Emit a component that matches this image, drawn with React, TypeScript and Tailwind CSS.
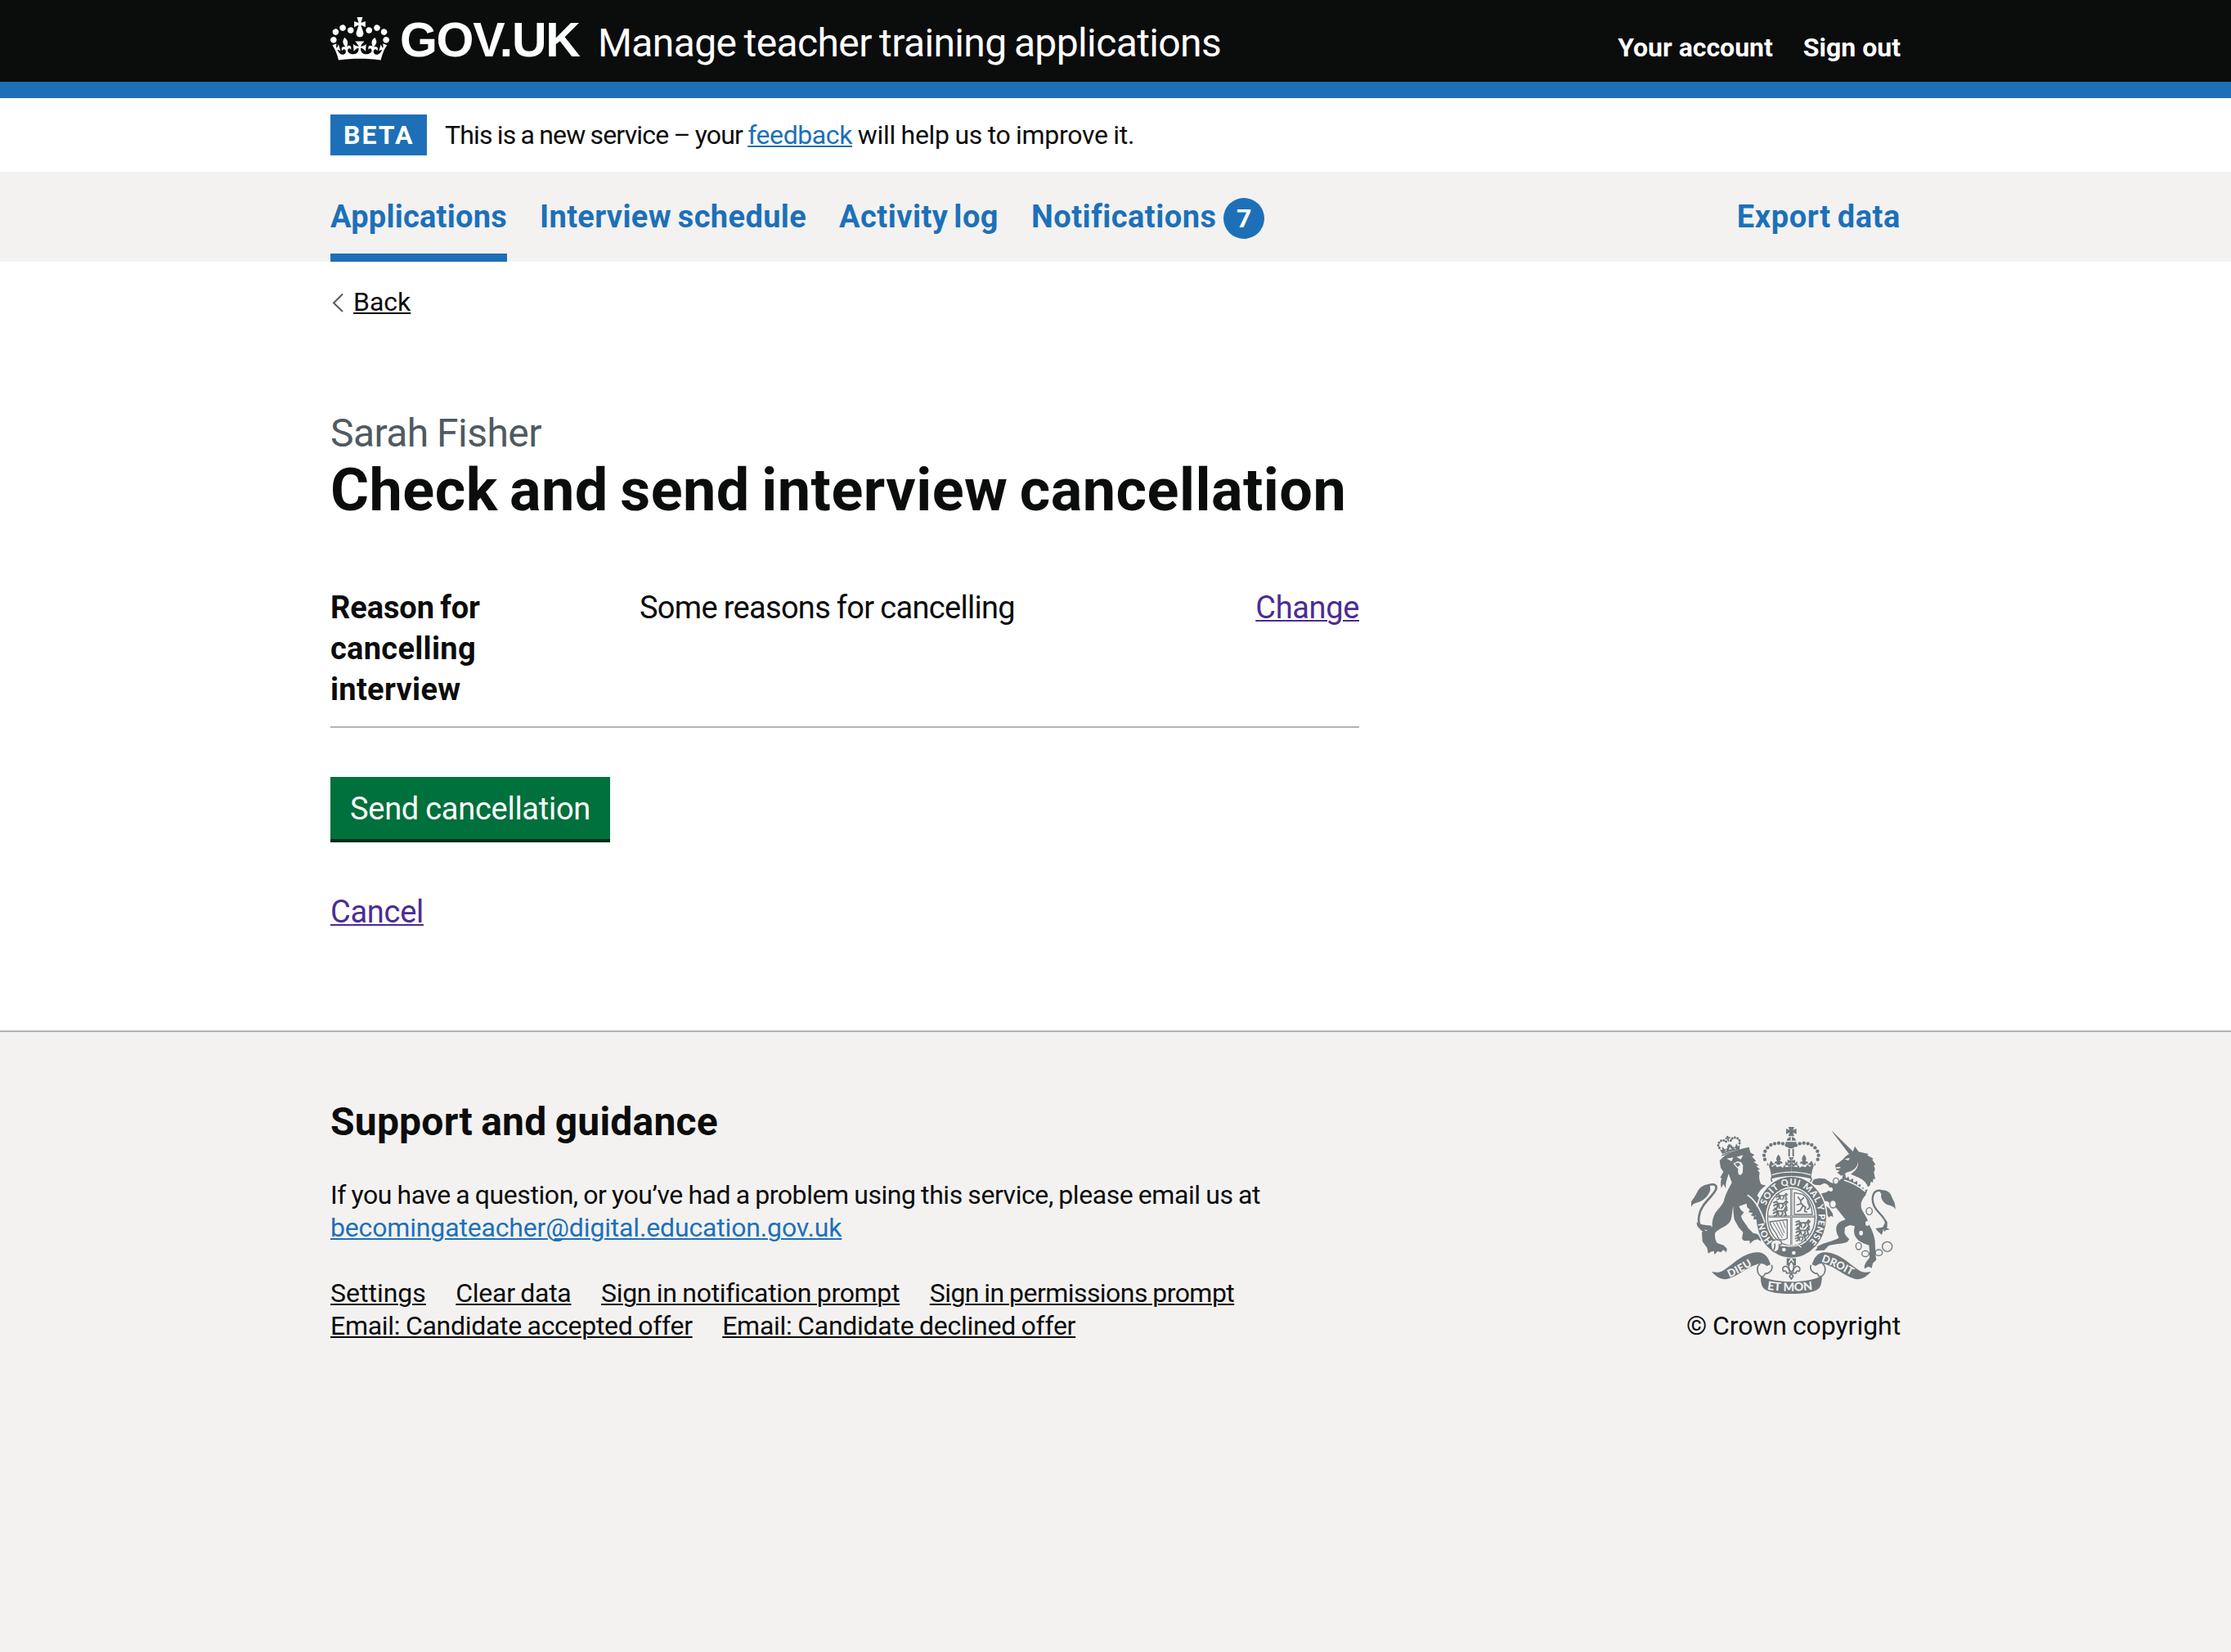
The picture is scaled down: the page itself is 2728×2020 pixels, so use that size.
import type { ReactNode } from "react";

const CROWN =
  "M25 30.2c3.5 1.5 7.7-.2 9.1-3.7 1.5-3.6-.2-7.8-3.9-9.2-3.6-1.4-7.6.3-9.1 3.9-1.4 3.5.3 7.5 3.9 9zM9 39.5c3.6 1.5 7.8-.2 9.2-3.7 1.5-3.6-.2-7.8-3.9-9.1-3.6-1.5-7.6.2-9.1 3.8-1.4 3.5.3 7.5 3.8 9zM4.4 57.2c3.5 1.5 7.7-.2 9.1-3.8 1.5-3.6-.2-7.7-3.9-9.1-3.5-1.5-7.6.3-9.1 3.8-1.4 3.5.3 7.6 3.9 9.1zm38.3-21.4c3.5 1.5 7.7-.2 9.1-3.8 1.5-3.6-.2-7.7-3.9-9.1-3.6-1.5-7.6.3-9.1 3.8-1.3 3.6.4 7.7 3.9 9.1zm64.4-5.6c-3.6 1.5-7.8-.2-9.1-3.7-1.5-3.6.2-7.8 3.8-9.2 3.6-1.4 7.7.3 9.2 3.9 1.3 3.5-.4 7.5-3.9 9zm15.9 9.3c-3.6 1.5-7.7-.2-9.1-3.7-1.5-3.6.2-7.8 3.7-9.1 3.6-1.5 7.7.2 9.2 3.8 1.5 3.5-.3 7.5-3.8 9zm4.7 17.7c-3.6 1.5-7.8-.2-9.2-3.8-1.5-3.6.2-7.7 3.9-9.1 3.6-1.5 7.7.3 9.2 3.8 1.3 3.5-.4 7.6-3.9 9.1zM89.3 35.8c-3.6 1.5-7.8-.2-9.2-3.8-1.4-3.6.2-7.7 3.9-9.1 3.6-1.5 7.7.3 9.2 3.8 1.4 3.6-.3 7.7-3.9 9.1zM69.7 17.7l8.9 4.7V9.3l-8.9 2.8c-.2-.3-.5-.6-.9-.9L72.4 0H59.6l3.5 11.2c-.3.3-.6.5-.9.9l-8.8-2.8v13.1l8.8-4.7c.3.3.6.7.9.9l-5 15.4v.1c-.2.8-.4 1.6-.4 2.4 0 4.1 3.1 7.5 7 8.1h.2c.3 0 .7.1 1 .1.4 0 .7 0 1-.1h.2c4-.6 7.1-4.1 7.1-8.1 0-.8-.1-1.7-.4-2.4V34l-5.1-15.4c.4-.2.7-.6 1-.9zM66 92.8c16.9 0 32.8 1.1 47.1 3.2 4-16.9 8.9-26.7 14-33.5l-9.6-3.4c1 4.9 1.1 7.2 0 10.2-1.5-1.4-3-4.3-4.2-8.7L108.6 76c2.8-2 5-3.2 7.5-3.3-4.4 9.4-10 11.9-13.6 11.2-4.3-.8-6.3-4.6-5.6-7.9 1-4.7 5.7-5.9 8-.5 4.3-8.7-3-11.4-7.6-8.8 7.1-7.2 7.9-13.5 2.1-21.1-8 6.1-8.1 12.3-4.5 20.8-4.7-5.4-12.1-2.5-9.5 6.2 3.4-5.2 7.9-2 7.2 3.1-.6 4.3-6.4 7.8-13.5 7.2-10.3-.9-10.9-8-11.2-13.8 2.5-.5 7.1 1.8 11 7.3L80.2 60c-4.1 4.4-8 5.3-12.3 5.4 1.4-4.4 8-11.6 8-11.6H55.5s6.4 7.2 7.9 11.6c-4.2-.1-8-1-12.3-5.4l1.4 16.4c3.9-5.5 8.5-7.7 10.9-7.3-.3 5.8-.9 12.8-11.1 13.8-7.2.6-12.9-2.9-13.5-7.2-.7-5 3.8-8.3 7.1-3.1 2.7-8.7-4.6-11.6-9.4-6.2 3.7-8.5 3.6-14.7-4.6-20.8-5.8 7.6-5 13.9 2.2 21.1-4.7-2.6-11.9.1-7.7 8.8 2.3-5.5 7.1-4.2 8.1.5.7 3.3-1.3 7.1-5.7 7.9-3.5.7-9-1.8-13.5-11.2 2.5.1 4.7 1.3 7.5 3.3l-4.7-15.4c-1.2 4.4-2.7 7.2-4.3 8.7-1.1-3-.9-5.3 0-10.2l-9.5 3.4c5 6.9 9.9 16.7 14 33.5 14.8-2.1 30.8-3.2 47.7-3.2z";

const INK = "#6f777b";
const PAPER = "#f3f2f1";

function CrestCrownHalf() {
  const beads = [
    [434, 121], [420, 115], [405, 113], [390, 115], [376, 120], [364, 130], [355, 143], [351, 158], [354, 173],
  ];
  return (
    <g>
      {beads.map(([x, y]) => (
        <circle key={x} cx={x} cy={y} r="6.5" />
      ))}
      <path d="M451 196l-12 4c2-6 4-10 10-16l-12 4v-14l12 4-8-13h10z" />
      <path d="M451 200l-8-8-14-12v16l8-2z" />
      <path d="M363 183l-1 13 12-4 8 8 11-8 5 10 14-4 8 6 6-12 4 10 21-4v36c-28 0-50 4-72 10-2-24-8-44-16-61z" />
      <path d="M404 155c9 10 10 18 4 26 7-3 12 1 10 9-5-4-8-2-8 3h-12c0-5-4-7-8-3-2-8 3-12 10-9-6-8-5-16 4-26z" />
      <path d="M376 178l14 14-12 4-8-4z" />
      <path d="M451 227c-26 0-46 3-66 9-9 3-10 12-4 19" fill="none" stroke={INK} strokeWidth="5" />
    </g>
  );
}

function RibbonHalf() {
  return (
    <g>
      <path d="M159 585c16 3 28 4 40-3 28-16 52-44 88-59 22-10 44-12 60-5 14 7 23 22 28 41l-14 5c-10-9-22-11-36-6-40 12-66 40-102 52-24 8-46-4-64-25z" />
      <path
        d="M379 560c6 18-8 32-24 32-4 8-6 14-14 10-16-8-20-36-4-46"
        fill="none"
        stroke={INK}
        strokeWidth="5"
        strokeLinejoin="round"
      />
      <path d="M338 600c30 16 70 21 114 22v44c-46-1-84-4-101-19-10-9-12-26-13-47z" />
    </g>
  );
}

/** A small passant lion, used in the quarters of the shield. */
function Passant({ x, y, s = 1 }: { x: number; y: number; s?: number }) {
  return (
    <g transform={`translate(${x} ${y}) scale(${s})`} fill="none" stroke={INK} strokeWidth="4.5" strokeLinecap="round">
      <path d="M4 6l8-3 4 6 18-1 6-7 4 4-6 6" />
      <path d="M8 12l8-2-3 12-6 1M18 12l2 10M30 10l2 6-6 7M38 11l4 10-5 1" />
      <path d="M4 15l5-3" />
    </g>
  );
}

function RoyalArms() {
  return (
    <svg className="h-[204px] w-[250px]" viewBox="84 54 750 612" fill={INK} aria-hidden="true">
      <defs>
        <path id="garterTop" d="M358 342A100 118 0 1 1 503 486" />
        <path id="garterSide" d="M384 474A100 118 0 0 1 351 390" />
        <path id="dieu" d="M224 606Q262 592 334 545" />
        <path id="droit" d="M561 548Q612 564 690 610" />
        <path id="etmon" d="M362 650Q450 664 546 648" />
      </defs>

      <g transform="translate(60 30)">
        <path d="M128 147l22-20c26-14 58-24 86-29l5 20 15 9-9 6 15 16-9 3 19 13-10 2 14 12-9 3 8 10c-4 14-1 28 5 42l18 5c-14 8-26 22-32 36l26 38 3 42c0 8-4 16-8 20l-8-8-12 5-2-10-13 2 2-12-12-4 8-8-16-3 5-10-10-8-2-14-12 4c-6 4-14 5-16 6 4 10 10 18 18 22l-10 14c4 18 18 28 26 44l18 18 16 4 14 14-2 12-12-7-14 4-14 12-1-11-20 1-8-8 4-24-16-18-16-28c-2-16-5-28-3-50-8 22-2 44-16 62-14 16-42 22-52 38 0 14 0 24 8 36l24 8 12 12-2 14-12-9-8 9-12-4-12 12-2-13-12 3-8 6c-4-8-2-16-6-22l-16-22-2-32 6-10 10 4 22-16c-1-24 5-40 12-52 14-18 28-30 32-48 8-28 20-46 28-62l-12-32-6 20c-4 14-5 24-4 34l-9-16-8 14c-3-16-2-28 2-36l-6-2 12-22-10-14z" />
        <path d="M154 140l24-4-6 14zM190 134l24-7-8 16z" fill={PAPER} />
        <path d="M178 158l16-8 14 4 6 12-1 24c-4 14-17 14-17 0-2-8 4-12-4-16z" fill={PAPER} />
        <path d="M184 158l14-3 6 8-10 8z" />
        <path d="M98 398c-18 2-34-4-43-16-8-16-2-48 12-68 16-24 40-42 48-62 4-14-6-22-28-14" fill="none" stroke={INK} strokeWidth="8" />
        <path d="M92 234c-16 0-34 8-42 22-8 14-12 24-26 42v20c4-8 8-12 14-14 26-6 46-20 56-48z" />
        <path d="M44 372c0 14 4 20 10 24 10 14 20 16 30 10-10-1-12-4-12-10l26 4v-14l-20-2-24-4z" />
      </g>

      <g transform="translate(60 30) rotate(-13 166 100)">
        {[[128, 92], [126, 82], [131, 73], [140, 68], [150, 69], [157, 75], [175, 75], [182, 69], [192, 68], [201, 73], [206, 82], [204, 92]].map(
          ([x, y]) => (
            <circle key={`${x}-${y}`} cx={x} cy={y} r="4.5" />
          ),
        )}
        <path d="M162 56h8l-1 6 6-2v8l-6-2-1 12h-4l-1-12-6 2v-8l6 2z" />
        <path d="M128 98l8 4 4-12 6 12 10-2 2-8 8-6 8 6 2 8 10 2 6-12 4 12 8-4-6 18c-20-4-44-4-64 0z" />
        <path d="M130 122c22-6 50-6 72 0" fill="none" stroke={INK} strokeWidth="4" />
        <path d="M146 110l6-6M162 108l4-8 4 8M186 110l-6-6" stroke={PAPER} strokeWidth="3" />
      </g>

      <g transform="translate(420 30)">
        <path d="M180 38c2 2 4 2 6 6l80 78-18 8-64-84z" />
        <path d="M194 162c14-10 26-18 34-28 8-8 18-12 27-14l9-25 14 20 36 8-4 5 22 12-4 4 12 18-6 2 4 16-4 10 5 26-7-2-2 14-7-4-4 16-8 4c-2-14-16-26-32-34l-42-18c-12 2-16 10-22 12l-10-8-6-4 10-8-12-2c-4-8-6-14-3-20z" />
        <path d="M226 142l20-4-6 9zM276 150c2 22-8 36-32 50l-14-8c32-6 44-20 46-42zM194 172l16-2 2 5-14 2z" fill={PAPER} />
        <path d="M214 214l90 60c-12 14-20 26-16 48 6 18 24 36 28 60 12 20 18 38 22 60l2 50c0 8 4 14 2 20l-12 12-4 18-12-6-14 8c-4-14 8-28 18-40v-26l-2-20c-16-6-34-12-44-24-10-12-14-26-8-46l-18-4-18 8-2 20c4 12 12 18 18 24l-8 10c-20 8-50 6-68 14l-16 16-34 2 10-12-6-2 22-10c20-8 46-12 62-24-10-16-14-34-6-48 6-10 18-14 30-18l-30-38-18-20c-10 0-18-12-28-10-6 4-2 12 4 18l10 6 14 20 3 14-10-4-6 6-8-12-12-4-1-14-16-32-6-12 8-12 24-6 14-8c2-14-6-22-20-26l-16 8-18-2-12-6 8-14 20-4 20 2 22 14 20 6z" />
        <path d="M222 200c6 14 12 20 22 24l34 16 30 16 6 4" fill="none" stroke={PAPER} strokeWidth="20" />
        <path d="M221 197l8-1 2 16 10-6 4 14 12-8 2 16 14-6v16l13-4-2 14 12-2-1 12 16-5-8 22-8-2c-20-20-54-36-81-44z" />
        <path d="M224 219c28 8 56 22 78 42" fill="none" stroke={PAPER} strokeWidth="5" />
        <path d="M378 268c-16-14-38-16-46 4-10 28 6 52 24 70 20 20 32 44 16 64" fill="none" stroke={INK} strokeWidth="7" />
        <path d="M354 258c24-8 42 6 46 24 6 14 12 16 13 44-8-12-14-12-28-16-14-6-28-22-24-40z" />
        <path d="M380 366c6 10 2 18-4 26l16 8c-8 4-16 2-24 0 0 8-2 12-6 20-6-8-14-12-22-24l26-4z" />
        <g fill="none" stroke={INK} strokeWidth="4">
          <ellipse cx="195" cy="223" rx="10" ry="12" />
          <ellipse cx="184" cy="307" rx="12" ry="14" fill={PAPER} />
          <ellipse cx="317" cy="333" rx="11" ry="13" fill={PAPER} />
          <ellipse cx="278" cy="461" rx="10" ry="13" />
          <ellipse cx="303" cy="489" rx="13" ry="11" />
          <ellipse cx="352" cy="485" rx="13" ry="11" />
          <circle cx="383" cy="463" r="18" />
        </g>
        <ellipse cx="176" cy="253" rx="7" ry="8" fill={PAPER} />
        <ellipse cx="310" cy="378" rx="7" ry="9" fill={PAPER} />
        <ellipse cx="287" cy="413" rx="7" ry="9" fill={PAPER} />
      </g>

      <ellipse cx="451" cy="385" rx="133" ry="153" fill={PAPER} />
      <ellipse cx="451" cy="385" rx="128" ry="148" />
      <ellipse cx="451" cy="385" rx="94" ry="111" fill={PAPER} />
      <ellipse cx="451" cy="385" rx="87" ry="104" fill={PAPER} stroke={INK} strokeWidth="4" />
      <path d="M451 280v212M364 383h174" stroke={INK} strokeWidth="7" />
      <path d="M451 280v212M364 383h174" stroke={PAPER} strokeWidth="1.5" />
      <Passant x={392} y={297} />
      <Passant x={382} y={324} s={1.25} />
      <Passant x={380} y={352} s={1.25} />
      <Passant x={464} y={395} s={1.25} />
      <Passant x={464} y={423} s={1.2} />
      <Passant x={462} y={449} />
      <path d="M462 295v80h66c0-30-14-60-36-74z" fill="none" stroke={INK} strokeWidth="4" />
      <g fill="none" stroke={INK} strokeWidth="5" strokeLinecap="round">
        <path d="M476 312l8 10 4 14 16 14M488 322l8-8M484 336l-12 4M494 342l-10 18-10 4M502 350l-2 14 8 2M510 356c14-4 6-16 2-24-2-8 2-12-4-16" />
      </g>
      <g fill="none" stroke={INK} strokeWidth="4">
        <path d="M372 402l64-8v68c-14 10-30 8-34-2-4-20-24-30-30-58z" />
        <path d="M384 404l34 58M396 403l26 50M408 401l18 42M420 399l10 26" strokeWidth="3" />
      </g>

      <path d="M376 470l44 18c20 8 42 8 66-2l30 18c-26 26-104 38-140-6z" />
      <path d="M400 486c22 6 46 6 72-2M472 484l16 12" fill="none" stroke={PAPER} strokeWidth="4" />
      <path d="M376 480c6-14 26-16 38-6 4 8-2 14-8 12 2 12 0 20-10 25-12 4-20-8-20-31z" fill={PAPER} stroke={INK} strokeWidth="4" />
      <path d="M390 482c2 10 0 18-4 24" fill="none" stroke={INK} strokeWidth="5" />
      <circle cx="424" cy="504" r="7" fill={PAPER} />
      <circle cx="460" cy="516" r="7" fill={PAPER} />
      <path d="M326 340c14 18 24 38 30 60l-8 10-10-6-12 4-2-14-8-2 4-14-12-4z" />
      <path d="M290 304c24 14 48 52 64 100" fill="none" stroke={PAPER} strokeWidth="5" />

      <path d="M380 250c-6-14 6-22 20-24 34-6 70-6 104 0 14 2 24 10 18 24-46-20-96-20-142 0z" fill={PAPER} />
      <CrestCrownHalf />
      <g transform="translate(902 0) scale(-1 1)">
        <CrestCrownHalf />
      </g>
      <path d="M440 54h22l-5 12 13-6v20l-13-6 5 14h-22l5-14-13 6V60l13 6z" />
      <path d="M434 104c2-18 32-18 34 0z" />
      <path d="M430 109h40c0 20-12 24-20 24s-20-4-20-24zM440 134h6v28h-6zM455 134h6v28h-6z" />
      <path d="M449 88h4v18h-4z" fill={PAPER} />
      <path d="M380 230c42-14 100-14 142 0" fill="none" stroke={PAPER} strokeWidth="4" />

      <path d="M434 536h34v26h-34z" />
      <path d="M451 534l10 14-4 12 2 20h-16l2-20-4-12z" fill={PAPER} />
      <g fill={PAPER} stroke={INK} strokeWidth="5" strokeLinejoin="round">
        <path d="M451 546c-12 14-12 20-4 38h8c8-18 8-24-4-38z" />
        <path d="M445 586c-2-14-10-24-20-20-8 4-6 14-2 18 6-4 12 0 10 8M457 586c2-14 10-24 20-20 8 4 6 14 2 18-6-4-12 0-10 8" />
        <path d="M432 590h38M451 592l-7 10 7 10 7-10z" />
      </g>

      <RibbonHalf />
      <g transform="translate(902 0) scale(-1 1)">
        <RibbonHalf />
      </g>

      <g fill={PAPER} className="font-['Lato','Liberation_Sans',sans-serif] font-black">
        <text fontSize="39" letterSpacing="1">
          <textPath href="#dieu">DIEU</textPath>
        </text>
        <text fontSize="39">
          <textPath href="#droit">DROIT</textPath>
        </text>
        <text fontSize="43">
          <textPath href="#etmon">ET MON</textPath>
        </text>
        <text fontSize="33" letterSpacing="2">
          <textPath href="#garterTop">SOIT QUI MAL Y PENSE</textPath>
        </text>
        <text fontSize="33">
          <textPath href="#garterSide">HON</textPath>
        </text>
      </g>
    </svg>
  );
}

function Container({ className = "", children }: { className?: string; children: ReactNode }) {
  return <div className={`mx-auto w-[1920px] ${className}`}>{children}</div>;
}

const LINK = "underline decoration-2 underline-offset-2";

export default function App() {
  return (
    <div className="flex min-h-[2020px] flex-col bg-white font-[Roboto,'Liberation_Sans',sans-serif] text-[32px] leading-[40px] text-[#0b0c0c]">
      <header className="h-[120px] border-b-[20px] border-[#1d70b8] bg-[#0b0c0c] text-white">
        <Container className="flex items-baseline pt-[19px]">
          <a href="#" className="flex items-baseline">
            <svg className="mt-[2px] h-[53px] w-[72px] self-start" viewBox="0 0 132 97" fill="currentColor" aria-hidden="true">
              <path fillRule="evenodd" d={CROWN} />
            </svg>
            <span className="ml-[13px] w-[220px] font-['Liberation_Sans',sans-serif] text-[59px] leading-[61px] font-bold tracking-[-1.3px]">
              GOV.UK
            </span>
          </a>
          <a href="#" className="ml-[22px] text-[48px] leading-[48px] tracking-[-0.62px] [word-spacing:-2px]">
            Manage teacher training applications
          </a>
          <nav className="ml-auto flex gap-[37px] font-bold">
            <a href="#">Your account</a>
            <a href="#">Sign out</a>
          </nav>
        </Container>
      </header>

      <Container className="flex h-[90px] items-center leading-[50px]">
        <strong className="w-[118px] bg-[#1d70b8] pl-[16px] tracking-[2px] text-white">BETA</strong>
        <p className="ml-[22px] whitespace-pre [word-spacing:-1px]">
          <span className="tracking-[-0.83px]">This is a new service – your </span>
          <a href="#" className={`${LINK} tracking-[-0.4px] text-[#1d70b8]`}>
            feedback
          </a>
          <span className="tracking-[-0.29px]"> will help us to improve it.</span>
        </p>
      </Container>

      <nav className="h-[110px] bg-[#f3f2f1] text-[38px] font-bold text-[#1d70b8]">
        <Container className="flex gap-[40px]">
          <a href="#" className="h-[110px] border-b-[10px] border-[#1d70b8] pt-[35px] tracking-[0.24px]">
            Applications
          </a>
          <a href="#" className="pt-[35px] tracking-[0.36px] [word-spacing:-2px]">
            Interview schedule
          </a>
          <a href="#" className="pt-[35px] tracking-[0.48px] [word-spacing:-3px]">
            Activity log
          </a>
          <a href="#" className="flex pt-[35px] tracking-[0.48px]">
            Notifications
            <span className="-mt-[3px] ml-[9px] flex size-[50px] items-center justify-center rounded-full bg-[#1d70b8] text-[32px] text-white">
              7
            </span>
          </a>
          <a href="#" className="ml-auto pt-[35px] tracking-[0.6px] [word-spacing:-2px]">
            Export data
          </a>
        </Container>
      </nav>

      <Container className="flex-none">
        <a href="#" className="mt-[29px] flex w-fit items-center">
          <svg className="mt-[2px] ml-[2px] h-[24px] w-[14px]" viewBox="0 0 14 24" fill="none" stroke="#505a5f" strokeWidth="2">
            <path d="M13 1.5 2 12.5l11 10.5" />
          </svg>
          <span className={`${LINK} ml-[12px]`}>Back</span>
        </a>

        <main className="mt-[116px] w-[1258px]">
          <h1>
            <span className="block text-[48px] leading-[50px] tracking-[-0.55px] text-[#505a5f] [word-spacing:-1px]">
              Sarah Fisher
            </span>
            <span className="mt-[5px] block text-[72px] leading-[80px] font-bold tracking-[0.47px] whitespace-nowrap [word-spacing:-4px]">
              Check and send interview cancellation
            </span>
          </h1>

          <dl className="mt-[78px] flex border-b-2 border-[#b1b4b6] pb-[20px] text-[38px] leading-[50px]">
            <dt className="w-[378px] pr-[150px] font-bold tracking-[0.3px]">
              <span className="tracking-[-0.1px] [word-spacing:-2px]">Reason for</span> cancelling interview
            </dt>
            <dd className="tracking-[-0.69px] [word-spacing:-1px]">Some reasons for cancelling</dd>
            <dd className="ml-auto">
              <a href="#" className={`${LINK} tracking-[-0.35px] text-[#4c2c92]`}>
                Change
              </a>
            </dd>
          </dl>

          <button
            type="button"
            className="mt-[60px] flex h-[80px] w-[342px] items-center justify-center border-b-4 border-[#002d18] bg-[#00703c] pt-[2px] text-[38px] leading-[50px] tracking-[-0.27px] whitespace-nowrap text-white [word-spacing:-1px]"
          >
            Send cancellation
          </button>
          <p className="mt-[60px] text-[38px] leading-[50px]">
            <a href="#" className={`${LINK} tracking-[-0.28px] text-[#4c2c92]`}>
              Cancel
            </a>
          </p>
        </main>
      </Container>

      <footer className="mt-[120px] flex-1 border-t-2 border-[#b1b4b6] bg-[#f3f2f1]">
        <Container className="flex items-end justify-between pt-[80px]">
          <div>
            <h2 className="text-[48px] leading-[60px] font-bold tracking-[0.22px] [word-spacing:-2px]">
              Support and guidance
            </h2>
            <p className="mt-[39px] tracking-[-0.43px] [word-spacing:-1px]">
              If you have a question, or you’ve had a problem using this service, please email us at
              <br />
              <a href="#" className={`${LINK} tracking-[-0.16px] text-[#1d70b8]`}>
                becomingateacher@digital.education.gov.uk
              </a>
            </p>
            <ul className="mt-[40px] flex w-[1200px] flex-wrap gap-x-[36.5px] [word-spacing:-1px]">
              <li>
                <a href="#" className={LINK}>
                  Settings
                </a>
              </li>
              <li>
                <a href="#" className={`${LINK} tracking-[-0.3px]`}>
                  Clear data
                </a>
              </li>
              <li>
                <a href="#" className={`${LINK} tracking-[-0.3px]`}>
                  Sign in notification prompt
                </a>
              </li>
              <li>
                <a href="#" className={`${LINK} tracking-[-0.55px]`}>
                  Sign in permissions prompt
                </a>
              </li>
              <li>
                <a href="#" className={`${LINK} tracking-[-0.29px]`}>
                  Email: Candidate accepted offer
                </a>
              </li>
              <li>
                <a href="#" className={`${LINK} tracking-[-0.27px]`}>
                  Email: Candidate declined offer
                </a>
              </li>
            </ul>
          </div>
          <div className="flex w-[262px] flex-col items-center">
            <RoyalArms />
            <a href="#" className="mt-[19px] tracking-[-0.05px] whitespace-nowrap [word-spacing:-1px]">
              © Crown copyright
            </a>
          </div>
        </Container>
      </footer>
    </div>
  );
}
